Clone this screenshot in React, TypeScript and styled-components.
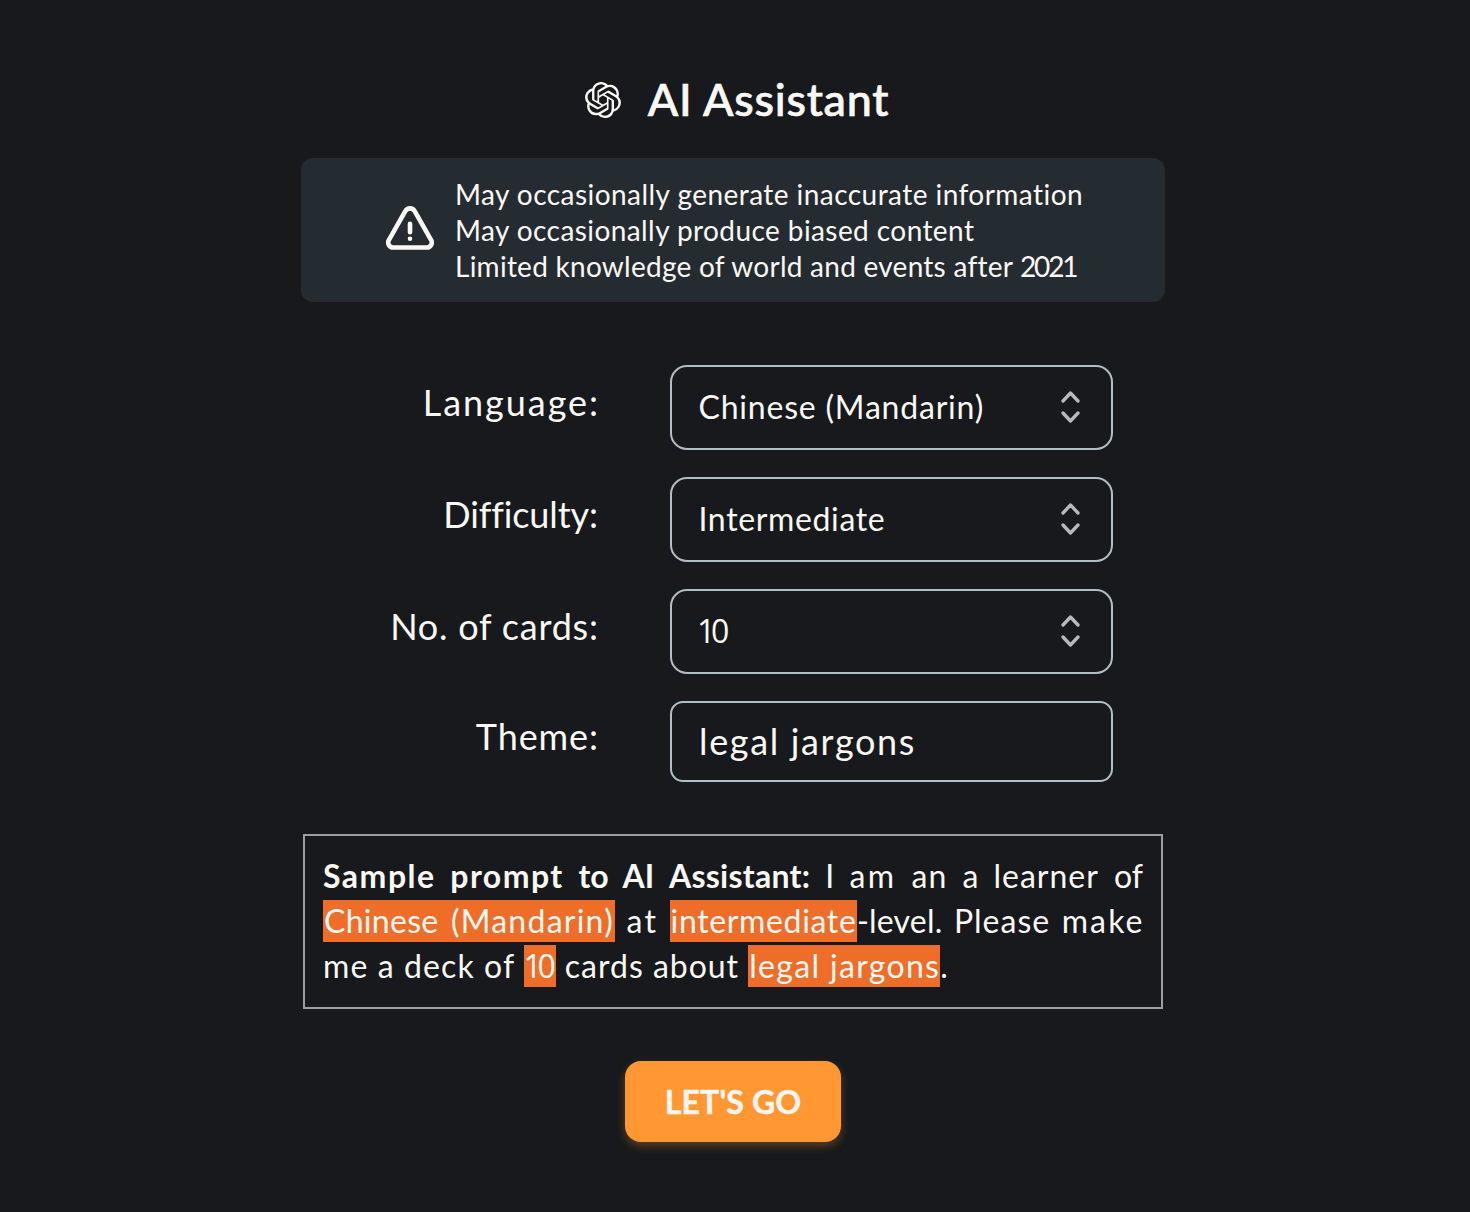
import React, { useState } from 'react';
import styled, { createGlobalStyle, css } from 'styled-components';

const ink = '#faf8f5';
const bodyFont = '"Lato", "Open Sans", sans-serif';

const GlobalStyle = createGlobalStyle`
  *, *::before, *::after { box-sizing: border-box; }
  body {
    margin: 0;
    background: #17191c;
    color: ${ink};
    font-family: ${bodyFont};
    font-kerning: normal;
    font-variant-ligatures: none;
  }
`;

const Page = styled.main`
  min-height: 1212px;
  padding: 70px 4px 0 0;
  display: flex;
  flex-direction: column;
  align-items: center;
`;

const Header = styled.header`
  display: flex;
  align-items: center;
  gap: 27px;
  height: 60px;
  margin-left: 8px;
`;

const Title = styled.h1`
  margin: 0;
  padding-bottom: 2px;
  font-size: 44.8px;
  line-height: 56px;
  font-weight: 500;
  letter-spacing: 0.75px;
  -webkit-text-stroke: 0.7px ${ink};
  white-space: nowrap;
`;

const Notice = styled.section`
  display: flex;
  align-items: center;
  gap: 21px;
  width: 864px;
  height: 144px;
  margin-top: 28px;
  padding-left: 85px;
  border-radius: 12px;
  background: #252c31;
`;

const WarningIcon = styled.svg`
  flex: none;
  width: 48px;
  height: 44px;
  margin-bottom: 5px;
`;

const NoticeLines = styled.div`
  font-size: 28px;
  line-height: 36px;
  white-space: nowrap;
`;

const NoticeLine = styled.div<{ $ls: number }>`
  letter-spacing: ${p => p.$ls}px;
`;

const Run = styled.span<{ $ls: number }>`
  letter-spacing: ${p => p.$ls}px;
`;

const Form = styled.form`
  display: flex;
  flex-direction: column;
  gap: 27px;
  width: 860px;
  margin-top: 63px;
`;

const Row = styled.div`
  display: grid;
  grid-template-columns: 295px 443px;
  column-gap: 72px;
  align-items: center;
`;

const Label = styled.label<{ $ls: number }>`
  justify-self: end;
  margin-right: ${p => -p.$ls}px;
  padding-bottom: 10px;
  font-size: 36px;
  line-height: 45px;
  letter-spacing: ${p => p.$ls}px;
  white-space: nowrap;
`;

const fieldBox = css`
  width: 100%;
  border: 2px solid #b0bec5;
  background: transparent;
  color: ${ink};
`;

const Select = styled.button.attrs({ type: 'button' })<{ $ls: number; $digits?: boolean }>`
  ${fieldBox}
  display: flex;
  align-items: center;
  justify-content: space-between;
  height: 85px;
  padding: 0 31px 1px ${p => (p.$digits ? 25 : 26.5)}px;
  border-radius: 17px;
  font-family: ${p => (p.$digits ? '"Open Sans", sans-serif' : bodyFont)};
  font-size: 32px;
  line-height: 40px;
  letter-spacing: ${p => p.$ls}px;
`;

const Input = styled.input`
  ${fieldBox}
  height: 81px;
  padding: 0 25px 1px 27px;
  border-radius: 13px;
  outline: none;
  font-family: ${bodyFont};
  font-size: 36px;
  letter-spacing: 1.65px;
`;

const Prompt = styled.section`
  width: 860px;
  margin-top: 52px;
  padding: 17px 18px 19px;
  border: 2px solid #9e9e9e;
  font-size: 32px;
  line-height: 45px;
`;

const PromptLine = styled.div<{ $justify?: boolean }>`
  white-space: nowrap;
  text-align: ${p => (p.$justify ? 'justify' : 'left')};
  text-align-last: ${p => (p.$justify ? 'justify' : 'left')};
`;

const Strong = styled.strong`
  font-weight: 700;
`;

const Highlight = styled.mark<{ $ls: number; $end?: number }>`
  padding: 0.8px ${p => p.$end ?? 1}px 2.2px 1px;
  background: #ee6e29;
  color: ${ink};
  letter-spacing: ${p => p.$ls}px;
`;

const Digits = styled.span`
  font-family: "Open Sans", sans-serif;
  line-height: 1;
  margin-left: -1.5px;
`;

const LastWord = styled.span`
  margin-right: -1.6px;
  letter-spacing: 2.1px;
`;

const GoButton = styled.button`
  width: 216px;
  height: 81px;
  margin-top: 52px;
  padding: 0;
  border: 0;
  border-radius: 16px;
  background: #ff9833;
  box-shadow: 0 4px 10px rgba(255, 152, 51, 0.3);
  color: #faf5ef;
  font-family: ${bodyFont};
  font-size: 32px;
  line-height: 40px;
  font-weight: 700;
  letter-spacing: 0.14px;
  -webkit-text-stroke: 0.5px #faf5ef;
`;

const AssistantLogo = () => (
  <svg width="36" height="36" viewBox="0 0 24 24" fill={ink}>
    <path d="M22.2819 9.8211a5.9847 5.9847 0 0 0-.5157-4.9108 6.0462 6.0462 0 0 0-6.5098-2.9A6.0651 6.0651 0 0 0 4.9807 4.1818a5.9847 5.9847 0 0 0-3.9977 2.9 6.0462 6.0462 0 0 0 .7427 7.0966 5.98 5.98 0 0 0 .511 4.9107 6.051 6.051 0 0 0 6.5146 2.9001A5.9847 5.9847 0 0 0 13.2599 24a6.0557 6.0557 0 0 0 5.7718-4.2058 5.9894 5.9894 0 0 0 3.9977-2.9001 6.0557 6.0557 0 0 0-.7475-7.0729zm-9.022 12.6081a4.4755 4.4755 0 0 1-2.8764-1.0408l.1419-.0804 4.7783-2.7582a.7948.7948 0 0 0 .3927-.6813v-6.7369l2.02 1.1686a.071.071 0 0 1 .038.052v5.5826a4.504 4.504 0 0 1-4.4945 4.4944zm-9.6607-4.1254a4.4708 4.4708 0 0 1-.5346-3.0137l.142.0852 4.783 2.7582a.7712.7712 0 0 0 .7806 0l5.8428-3.3685v2.3324a.0804.0804 0 0 1-.0332.0615L9.74 19.9502a4.4992 4.4992 0 0 1-6.1408-1.6464zM2.3408 7.8956a4.485 4.485 0 0 1 2.3655-1.9728V11.6a.7664.7664 0 0 0 .3879.6765l5.8144 3.3543-2.0201 1.1685a.0757.0757 0 0 1-.071 0l-4.8303-2.7865A4.504 4.504 0 0 1 2.3408 7.872zm16.5963 3.8558L13.1038 8.364 15.1192 7.2a.0757.0757 0 0 1 .071 0l4.8303 2.7913a4.4944 4.4944 0 0 1-.6765 8.1042v-5.6772a.79.79 0 0 0-.407-.667zm2.0107-3.0231l-.142-.0852-4.7735-2.7818a.7759.7759 0 0 0-.7854 0L9.409 9.2297V6.8974a.0662.0662 0 0 1 .0284-.0615l4.8303-2.7866a4.4992 4.4992 0 0 1 6.6802 4.66zM8.3065 12.863l-2.02-1.1638a.0804.0804 0 0 1-.038-.0567V6.0742a4.4992 4.4992 0 0 1 7.3757-3.4537l-.142.0805L8.704 5.459a.7948.7948 0 0 0-.3927.6813zm1.0976-2.3654l2.602-1.4998 2.6069 1.4998v2.9994l-2.5974 1.4997-2.6067-1.4997Z" />
  </svg>
);

const Warning = () => (
  <WarningIcon viewBox="0 0 48 44" fill="none" stroke={ink} strokeWidth="4.6" strokeLinecap="round" strokeLinejoin="round">
    <path d="M19.3 5.1a5.4 5.4 0 0 1 9.4 0L45 33.8a5 5 0 0 1-4.4 7.7H7.4A5 5 0 0 1 3 33.8Z" />
    <path d="M24 17.9v8.3M24 32.7v.02" />
  </WarningIcon>
);

const Chevrons = () => (
  <svg width="19" height="34" viewBox="0 0 19 34" fill="none" stroke="#b9b9b9" strokeWidth="3.3" strokeLinecap="round" strokeLinejoin="round">
    <path d="M2 11 9.5 3 17 11M2 23l7.5 8 7.5-8" />
  </svg>
);

const selects = [
  { label: 'Language:', labelLs: 1.95, value: 'Chinese (Mandarin)', ls: 0.8 },
  { label: 'Difficulty:', labelLs: -0.1, value: 'Intermediate', ls: 0.65 },
  { label: 'No. of cards:', labelLs: 0.78, value: '10', ls: -4.3, digits: true },
];

export default function App() {
  const [theme, setTheme] = useState('legal jargons');
  return (
    <>
      <GlobalStyle />
      <Page>
        <Header>
          <AssistantLogo />
          <Title>AI Assistant</Title>
        </Header>
        <Notice>
          <Warning />
          <NoticeLines>
            <NoticeLine $ls={0.45}>May occasionally generate inaccurate information</NoticeLine>
            <NoticeLine $ls={0.42}>May occasionally produce biased content</NoticeLine>
            <NoticeLine $ls={0.26}>Limited knowledge of world and events after <Run $ls={-2.2}>2021</Run></NoticeLine>
          </NoticeLines>
        </Notice>
        <Form>
          {selects.map(s => (
            <Row key={s.label}>
              <Label $ls={s.labelLs}>{s.label}</Label>
              <Select $ls={s.ls} $digits={s.digits}>
                {s.value}
                <Chevrons />
              </Select>
            </Row>
          ))}
          <Row>
            <Label $ls={0.9} htmlFor="theme">Theme:</Label>
            <Input id="theme" value={theme} onChange={e => setTheme(e.target.value)} />
          </Row>
        </Form>
        <Prompt>
          <PromptLine $justify>
            <Strong>
              <Run $ls={1.5}>Sample</Run> <Run $ls={1.44}>prompt</Run> <Run $ls={0.2}>to</Run> <Run $ls={0}>AI</Run>{' '}
              <Run $ls={0.25}>Assistant:</Run>
            </Strong>{' '}
            I <Run $ls={2.4}>am</Run> <Run $ls={1}>an</Run> a <Run $ls={1}>learner</Run> of
          </PromptLine>
          <PromptLine $justify>
            <Highlight $ls={0.85}>
              <Run $ls={0.3}>Chinese</Run> <Run $ls={1.25}>(Mandarin)</Run>
            </Highlight>{' '}
            <Run $ls={2.2}>at</Run> <Highlight $ls={0.65} $end={0.5}>intermediate</Highlight>
            <Run $ls={0.2}>-level.</Run> <Run $ls={1}>Please</Run> <LastWord>make</LastWord>
          </PromptLine>
          <PromptLine>
            <Run $ls={1.1}>me a deck of </Run>
            <Highlight $ls={-4.3} $end={4.2}><Digits>10</Digits></Highlight>
            <Run $ls={0.98}> cards about </Run>
            <Highlight $ls={1.32} $end={0}>{theme}</Highlight>.
          </PromptLine>
        </Prompt>
        <GoButton type="button">LET'S GO</GoButton>
      </Page>
    </>
  );
}
